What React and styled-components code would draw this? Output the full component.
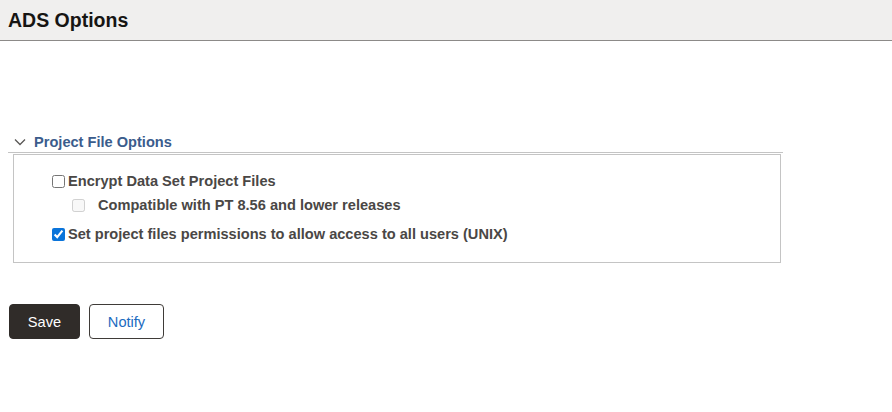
import styled, { createGlobalStyle } from 'styled-components';

const GlobalStyle = createGlobalStyle`
  body {
    margin: 0;
    background: #fff;
    font-family: 'Liberation Sans', Arial, sans-serif;
  }
`;

const Header = styled.header`
  height: 41px;
  background-color: #f0efee;
  border-bottom: 1px solid #8c8a88;
  display: flex;
  align-items: center;
  padding: 0 8px;
  box-sizing: border-box;
`;

const Title = styled.h1`
  margin: 0;
  font-size: 19.5px;
  font-weight: 700;
  color: #161513;
`;

const Content = styled.main`
  padding: 92px 8px 0 8px;
  width: 775px;
`;

const SectionHeader = styled.button`
  display: flex;
  align-items: center;
  gap: 8px;
  width: 100%;
  padding: 0 0 2px 6px;
  background: none;
  border: none;
  border-bottom: 1px solid #c4c4c4;
  font-family: inherit;
  font-size: 14.6px;
  font-weight: 700;
  color: #3b5c8c;
  cursor: pointer;
  height: 20px;
`;

const Panel = styled.div`
  margin: 1px 2px 0 5px;
  border: 1px solid #c4c4c4;
  padding: 18px 0 20px 38px;
  display: flex;
  flex-direction: column;
  gap: 8px;
`;

const Option = styled.label`
  display: flex;
  align-items: center;
  gap: ${(p) => (p.$indent ? '13px' : '3px')};
  margin-left: ${(p) => (p.$indent ? '20px' : '0')};
  margin-top: ${(p) => (p.$spaced ? '5px' : '0')};
  font-size: 14.6px;
  font-weight: 700;
  color: #4a4745;
  line-height: 16px;
`;

const Check = styled.input`
  margin: 0;
  width: 13px;
  height: 13px;
  accent-color: #0a74da;
`;

const Actions = styled.div`
  display: flex;
  gap: 9px;
  padding: 41px 9px 0;
`;

const Button = styled.button`
  height: 35px;
  padding: 0 17px;
  border-radius: 4px;
  font-family: inherit;
  font-size: 14.6px;
  border: 1px solid ${(p) => (p.$primary ? '#302c29' : '#3f3b38')};
  background: ${(p) => (p.$primary ? '#302c29' : '#fff')};
  color: ${(p) => (p.$primary ? '#fff' : '#1c6bbf')};
  min-width: ${(p) => (p.$primary ? '71px' : '75px')};
`;

function Chevron() {
  return (
    <svg width="12" height="8" viewBox="0 0 12 8" fill="none">
      <path d="M1 1.5 L6 6.5 L11 1.5" stroke="#5a5856" strokeWidth="1.3" />
    </svg>
  );
}

export default function App() {
  return (
    <>
      <GlobalStyle />
      <Header>
        <Title>ADS Options</Title>
      </Header>
      <Content>
        <SectionHeader>
          <Chevron />
          Project File Options
        </SectionHeader>
        <Panel>
          <Option>
            <Check type="checkbox" />
            Encrypt Data Set Project Files
          </Option>
          <Option $indent>
            <Check type="checkbox" disabled />
            Compatible with PT 8.56 and lower releases
          </Option>
          <Option $spaced>
            <Check type="checkbox" defaultChecked />
            Set project files permissions to allow access to all users (UNIX)
          </Option>
        </Panel>
      </Content>
      <Actions>
        <Button $primary>Save</Button>
        <Button>Notify</Button>
      </Actions>
    </>
  );
}
